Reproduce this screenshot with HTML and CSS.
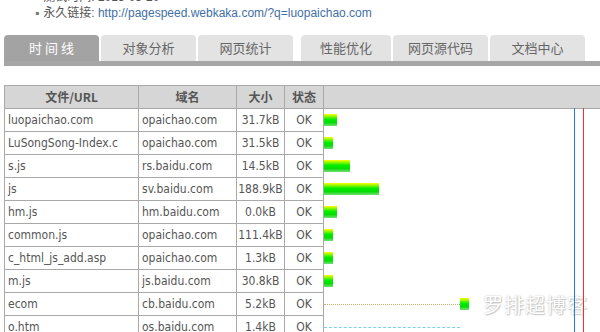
FILE: index.html
```html
<!DOCTYPE html>
<html>
<head>
  <meta charset="utf-8">
  <title>网页速度测试</title>
  <link rel="stylesheet" href="styles.css">
</head>
<body>
  <ul class="info">
    <li>测试时间: 2013-05-20</li>
    <li>永久链接: <a href="#">http://pagespeed.webkaka.com/?q=luopaichao.com</a></li>
  </ul>

  <div class="tabs">
    <div class="tab active">时 间 线</div>
    <div class="tab">对象分析</div>
    <div class="tab">网页统计</div>
    <div class="tab">性能优化</div>
    <div class="tab">网页源代码</div>
    <div class="tab">文档中心</div>
  </div>
  <div class="tab-bar"></div>

  <div class="result">
    <table class="timeline">
      <colgroup>
        <col class="c-url">
        <col class="c-host">
        <col class="c-size">
        <col class="c-state">
        <col class="c-wf">
      </colgroup>
      <tr>
        <th>文件/URL</th>
        <th>域名</th>
        <th>大小</th>
        <th>状态</th>
        <th></th>
      </tr>
      <tr><td>luopaichao.com</td><td>opaichao.com</td><td class="num">31.7kB</td><td class="ok">OK</td><td class="wf"><span class="bar" style="width:13px"></span></td></tr>
      <tr><td>LuSongSong-Index.c</td><td>opaichao.com</td><td class="num">31.5kB</td><td class="ok">OK</td><td class="wf"><span class="bar" style="width:9px"></span></td></tr>
      <tr><td>s.js</td><td>rs.baidu.com</td><td class="num">14.5kB</td><td class="ok">OK</td><td class="wf"><span class="bar" style="width:26px"></span></td></tr>
      <tr><td>js</td><td>sv.baidu.com</td><td class="num">188.9kB</td><td class="ok">OK</td><td class="wf"><span class="bar" style="width:55px"></span></td></tr>
      <tr><td>hm.js</td><td>hm.baidu.com</td><td class="num">0.0kB</td><td class="ok">OK</td><td class="wf"><span class="bar" style="width:13px"></span></td></tr>
      <tr><td>common.js</td><td>opaichao.com</td><td class="num">111.4kB</td><td class="ok">OK</td><td class="wf"><span class="bar" style="width:9px"></span></td></tr>
      <tr><td>c_html_js_add.asp</td><td>opaichao.com</td><td class="num">1.3kB</td><td class="ok">OK</td><td class="wf"><span class="bar" style="width:9px"></span></td></tr>
      <tr><td>m.js</td><td>js.baidu.com</td><td class="num">30.8kB</td><td class="ok">OK</td><td class="wf"><span class="bar" style="width:9px"></span></td></tr>
      <tr><td>ecom</td><td>cb.baidu.com</td><td class="num">5.2kB</td><td class="ok">OK</td><td class="wf"><span class="wait tan" style="width:136px"></span><span class="bar" style="width:9px"></span></td></tr>
      <tr><td>o.htm</td><td>os.baidu.com</td><td class="num">1.4kB</td><td class="ok">OK</td><td class="wf"><span class="wait cyan" style="width:136px"></span></td></tr>
    </table>
    <div class="marks"><span class="dom"></span><span class="load"></span></div>
    <div class="watermark">罗排超博客</div>
  </div>
</body>
</html>
```

FILE: styles.css
```css
body {
  margin: 0;
  padding: 0 0 0 4px;
  overflow: hidden;
  background: #fff;
  font-family: "DejaVu Sans Condensed", "DejaVu Sans", "Noto Sans CJK SC", sans-serif;
  font-stretch: condensed;
  font-size: 12px;
  color: #555;
}

.info {
  list-style: none;
  margin: -11px 0 0 0;
  padding: 0 0 0 31px;
  line-height: 16px;
  font-family: "Liberation Sans", "Noto Sans CJK SC", sans-serif;
  font-stretch: normal;
  font-size: 12px;
}

.info li:before {
  content: "\25AA";
  margin-right: 4px;
  color: #777;
}

.info a {
  color: #3f6fa8;
  text-decoration: none;
}

.tabs {
  display: flex;
  gap: 2px;
  margin-top: 14px;
  height: 26px;
}

.tab {
  width: 95px;
  height: 26px;
  line-height: 26px;
  text-align: center;
  background-color: #e3e3e3;
  border-radius: 4px 4px 0 0;
  font-family: "Noto Sans CJK SC", sans-serif;
  font-size: 13px;
  color: #666;
}

.tab.active {
  background-color: #a3a3a3;
  color: #fff;
}

.tab:nth-child(4) {
  margin-left: 6px;
  width: 90px;
}

.tab-bar {
  height: 5px;
  background-color: #a6a6a6;
}

.result {
  position: relative;
  margin-top: 19px;
}

.timeline {
  border-collapse: collapse;
  width: 620px;
  table-layout: fixed;
}

.c-url { width: 134px; }
.c-host { width: 98px; }
.c-size { width: 48px; }
.c-state { width: 39px; }

.timeline th,
.timeline td {
  border: 1px solid #a9a9a9;
  height: 22px;
  padding: 0 0 0 3px;
  white-space: nowrap;
  overflow: hidden;
  line-height: 22px;
}

.timeline th {
  background-color: #d6d6d6;
  font-family: "Noto Sans CJK SC", sans-serif;
  font-weight: bold;
  font-size: 12px;
  color: #555;
  text-align: center;
  padding: 0;
}

.timeline td.num,
.timeline td.ok {
  text-align: center;
  padding: 0;
}

.timeline td.wf {
  border-top: none;
  border-bottom: none;
  border-right: none;
  padding: 0;
  font-size: 0;
  line-height: 0;
}

.bar {
  display: inline-block;
  vertical-align: middle;
  height: 12px;
  background: linear-gradient(#ffff00 0%, #00ee00 45%, #00dd00 70%, #77dd77 100%);
}

.wait {
  display: inline-block;
  vertical-align: middle;
  height: 0;
}

.wait.tan {
  border-top: 1px dotted #c8b070;
}

.wait.cyan {
  border-top: 1px dashed #7ad4e4;
}

/* DOM ready (blue) and page load (red) markers */
.marks {
  position: absolute;
  top: 23px;
  left: 570px;
  height: 260px;
  display: flex;
  gap: 8px;
  z-index: 2;
}

.marks span {
  width: 1px;
  height: 100%;
}

.marks .dom {
  background-color: #1a7fe0;
}

.marks .load {
  background-color: #f03030;
}

.watermark {
  position: absolute;
  left: 479px;
  top: 205px;
  font-family: "Noto Sans CJK SC", sans-serif;
  font-size: 20px;
  color: #fff;
  letter-spacing: 1px;
  text-shadow: 0 0 2px #bbb, 1px 1px 1px #ccc;
}
```
